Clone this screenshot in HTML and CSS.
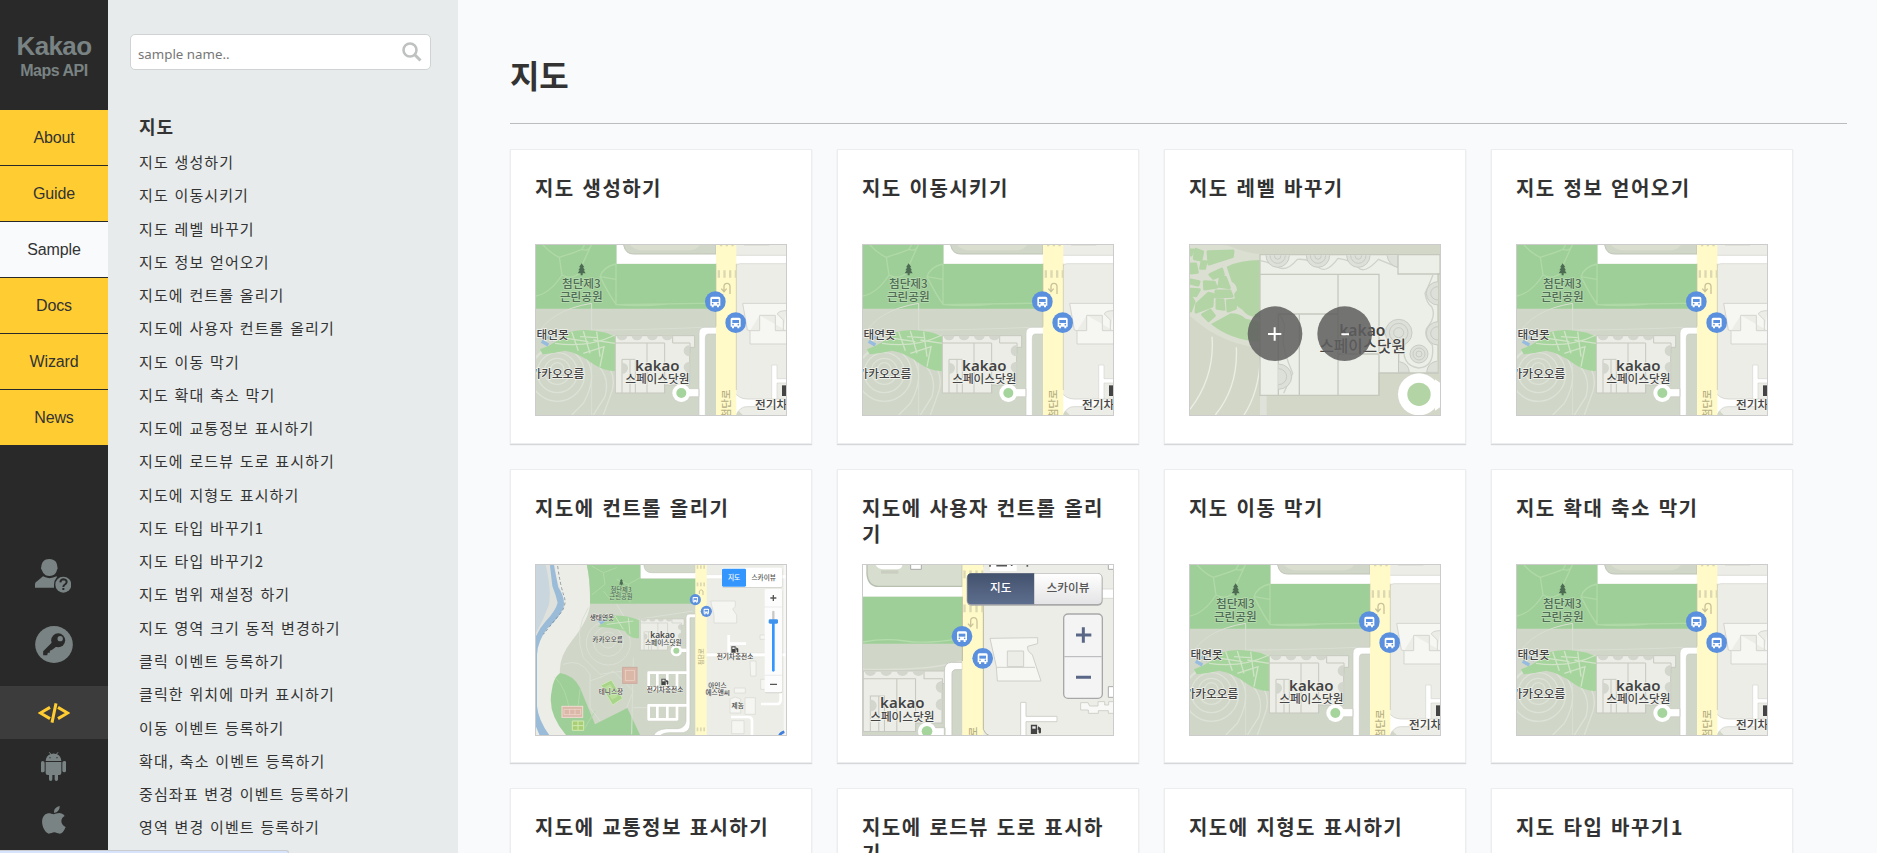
FILE: index.html
```html
<!DOCTYPE html>
<html lang="ko">
<head>
<meta charset="utf-8">
<title>Kakao Maps API - Sample</title>
<link rel="stylesheet" href="styles.css">
</head>
<body>
<svg class="defs" width="0" height="0" aria-hidden="true">
  <defs>
    <linearGradient id="navy" x1="0" y1="0" x2="0" y2="1"><stop offset="0" stop-color="#43526d"/><stop offset="1" stop-color="#5d6e8e"/></linearGradient>
    <linearGradient id="silver" x1="0" y1="0" x2="0" y2="1"><stop offset="0" stop-color="#fff"/><stop offset="1" stop-color="#e4e4e6"/></linearGradient>
    <g id="bus">
      <circle r="31" fill="#5b90de"/>
      <path d="M-15-10q0-5 5-5h20q5 0 5 5v22h-4v5h-6v-5h-10v5h-6v-5h-4z" fill="#fff"/>
      <path d="M-10-8h20v9h-20z" fill="#5b90de"/>
      <circle cx="-8" cy="6" r="2.5" fill="#5b90de"/><circle cx="8" cy="6" r="2.5" fill="#5b90de"/>
    </g>
    <g id="tree" fill="#4c6b52"><path d="M0-17l8 12h-4l6 9h-4l6 9H3v6h-6v-6h-9l6-9h-4l6-9h-4z"/></g>
    <g id="pump"><path d="M-10-10h13v19h-13zM5-7l6 4v9q-2 4-5 0V0h-2" fill="#444"/><path d="M-7-7h7v5h-7z" fill="#eee"/></g>
    <g id="building">
      <path d="M346 587H584V622H569V735H494V759H346Z" fill="#ecede7" stroke="#c6c9bf" stroke-width="3"/>
      <path d="M346 609H494V759M441 609V759M366 759V658H406V759M390 658V759M518 587V609H570V640" fill="none" stroke="#c6c9bf" stroke-width="3"/>
      <g fill="#d3d6cc"><path d="M350 587a16 14 0 0 0 32 0zM395 587a16 14 0 0 0 32 0zM441 587a16 14 0 0 0 32 0zM486 587a16 14 0 0 0 32 0zM569 615a18 17 0 0 0 0 34zM569 665a18 17 0 0 0 0 34zM366 668a18 17 0 0 1 0 34z"/></g>
    </g>
    <symbol id="map-base" viewBox="108 315 750 510" preserveAspectRatio="none">
      <rect x="100" y="310" width="770" height="520" fill="#d0d6c8"/>
      <path d="M100 310H350V372H648V506H100Z" fill="#9fcf98"/>
      <g fill="none" stroke="#b0d9a8" stroke-width="4">
        <path d="M125 310Q150 340 178 352Q230 335 246 328L256 310M246 328Q266 336 274 315L238 392M300 410Q310 380 348 372M178 352L186 405Q150 460 108 468M186 405Q215 420 238 400M300 410L348 418M300 410Q330 470 348 492M348 372V494L600 490Q640 492 648 480M350 494Q420 500 500 492"/>
      </g>
      <path d="M108 590Q150 510 275 490V825M275 570Q430 570 610 562" fill="none" stroke="#dadfd3" stroke-width="3"/>
      <path d="M350 310H648V371H350Z" fill="#fff"/>
      <path d="M371 310H648V342H400Q376 342 371 315Z" fill="#d0d6c8" stroke="#bfc6b7" stroke-width="3"/>
      <path d="M390 315H600Q590 328 575 331H420Q402 328 390 315Z" fill="#d9decf"/>
      <g fill="none" stroke="#dde2d7" stroke-width="4">
        <circle cx="172" cy="688" r="20"/><circle cx="172" cy="694" r="39"/><circle cx="172" cy="698" r="60"/><circle cx="172" cy="702" r="82"/>
        <path d="M108 655Q150 600 250 645Q300 700 250 790L215 825M230 635Q340 680 315 770L280 825"/>
        <path d="M300 650Q360 700 330 770L310 825"/>
      </g>
      <path d="M120 628Q170 610 200 578Q250 562 318 578L346 590V693Q315 695 280 672Q240 640 195 632Q160 640 128 643Z" fill="#a5d59c"/>
      <path d="M165 610Q260 625 346 585M215 575L235 632M250 573L270 640M290 575L300 650M200 595L265 605M250 640L312 620L300 680M280 600L346 610M240 590L290 593" fill="none" stroke="#d0e3c7" stroke-width="4"/>
      <path d="M125 604l20 11M142 590l18 10" stroke="#96bce0" stroke-width="10"/>
      <use href="#building"/>
      <path d="M597 830V580Q597 562 614 562H650V582H625Q616 582 616 595V830ZM545 746H597V770H545Z" fill="#fff" stroke="#c9ccc2" stroke-width="2"/>
      <circle cx="544" cy="759" r="27" fill="#fff"/><circle cx="544" cy="759" r="15" fill="#a5d59c"/>
      <path d="M708 310H860V830H738Q708 820 708 770Z" fill="#ecede7"/>
      <path d="M700 346H860V371H720Q708 371 708 380H700Z" fill="#fff" stroke="#d0d0ca" stroke-width="2"/>
      <path d="M732 310H808V318H732Z" fill="#e0e2da"/>
      <path d="M700 752Q715 777 742 777H860V800H740Q720 800 708 825H700Z" fill="#fff" stroke="#c9ccc2" stroke-width="2"/>
      <path d="M815 777V675H831V716H860V729H831V777Z" fill="#fff" stroke="#d5d6d0" stroke-width="2"/>
      <path d="M728 490H860V612H750V572L742 570Z" fill="#f6f6f3" stroke="#d4d5cf" stroke-width="3"/>
      <path d="M779 526H826V572H860M779 526V572H750M860 512Q835 512 832 522L850 540V570" fill="#ecede7" stroke="#d4d5cf" stroke-width="3"/>
      <path d="M648 310H709V830H648Z" fill="#fffac8"/>
      <path d="M648 371V560M709 371V750" stroke="#c4c2a8" stroke-width="2"/>
      <path d="M653 402H709" stroke="#dcd8b2" stroke-width="22" stroke-dasharray="7 10"/>
      <path d="M660 315H709" stroke="#dcd8b2" stroke-width="8" stroke-dasharray="7 10"/>
      <path d="M690 462V440Q690 430 681 430T672 440V452M664 446L672 455L680 446" fill="none" stroke="#c9c39a" stroke-width="4"/>
      <text class="road" transform="translate(689 834) rotate(-90)">첨단로</text>
      <use href="#tree" x="245" y="387"/>
      <g class="park"><text x="244" y="445">첨단제3</text><text x="244" y="482">근린공원</text></g>
      <g class="poi"><text x="158" y="597">태연못</text><text x="172" y="714">가카오오름</text><text x="472" y="729">스페이스닷원</text><text x="765" y="806" class="start">전기차</text></g>
      <text class="kakao" x="472" y="694">kakao</text>
      <path d="M846 736H860V768H846Z" fill="#444"/>
      <use href="#bus" x="646" y="485"/><use href="#bus" x="707" y="548"/>
    </symbol>
    <symbol id="map-level" viewBox="90 315 750 510" preserveAspectRatio="none">
      <rect x="80" y="310" width="770" height="520" fill="#d3d7c8"/>
      <path d="M80 310L200 316Q260 340 300 343V625Q200 610 130 560L80 520Z" fill="#dbdfd2"/>
      <path d="M200 380Q240 360 300 360V530Q265 535 248 510Q215 490 225 470Q240 440 215 425ZM153 552L212 520Q240 520 257 536L300 545V605Q210 600 153 552Z" fill="#b3d5a6"/>
      <g fill="#b3d5a6" stroke="#b3d5a6" stroke-width="9" stroke-linejoin="round">
        <path d="M92 330h8l-7 15zM93 372h14l5 25-18 2zM108 328l20 8-5 24-20-4zM144 335l75-2-2 17-70 22zM126 365h12l-4 20h-12zM150 404l35-17 5 16-30 12zM181 412h15l12 31-31-4zM133 425l30 2 6 15-35 5zM92 420l25 5-3 10-23-5zM92 448l26 1-10 18-17-3zM92 470l10 15-10 28zM110 492l35-32 13 3-2 35-48 18zM168 453h42l6 16-50 2zM171 480h18l3 28-21-3zM202 482l26-2-2 25-22 8zM128 524l23-13 12 16-17 15z"/>
        <circle cx="114" cy="347" r="10"/><circle cx="236" cy="465" r="9"/>
      </g>
      <path d="M156 590Q165 710 90 808M229 622Q235 740 166 825M301 660Q295 760 252 825" fill="none" stroke="#eceee6" stroke-width="4"/>
      <path d="M300 766h20v60h-20z" fill="#dfe2d8"/>
      <path d="M300 344H840V402H834V699H657V766H300Z" fill="#eceee8" stroke="#c5c9bd" stroke-width="4"/>
      <path d="M300 403H657V766M534 403V766M355 766V522H534M418 522V766M534 642H657M657 584H716V699M714 344V402H840" fill="none" stroke="#c5c9bd" stroke-width="4"/>
      <path d="M300 362Q325 365 352 381T412 358Q450 355 473 380T534 355Q575 360 594 382T655 358L714 382M820 402Q805 440 795 460Q800 490 815 500Q830 530 800 565Q790 590 817 615Q825 680 776 684Q720 675 735 610M355 522Q380 545 371 580T398 700L371 760" fill="none" stroke="#cfd2c9" stroke-width="4"/>
      <g fill="#dde0d8" stroke="#c8cbc3" stroke-width="3">
        <path d="M318 346a35 36 0 0 0 70 0M439 346a35 36 0 0 0 70 0M560 346a35 36 0 0 0 70 0M681 346q5 30 32 36V346M834 425a35 35 0 0 0 0 70M834 545a35 35 0 0 0 0 70M355 672a40 38 0 0 1 0 76"/>
        <path d="M330 346a23 24 0 0 0 46 0M451 346a23 24 0 0 0 46 0M572 346a23 24 0 0 0 46 0M834 440a22 20 0 0 0 0 40M834 560a22 20 0 0 0 0 40M355 686a25 24 0 0 1 0 48M343 346a10 12 0 0 0 20 0M464 346a10 12 0 0 0 20 0M585 346a10 12 0 0 0 20 0M718 665q28 5 30 32h-30M832 663q-30 5-32 34h32"/>
        <circle cx="716" cy="578" r="40"/><circle cx="716" cy="578" r="28"/><circle cx="716" cy="578" r="15"/>
        <circle cx="777" cy="642" r="27"/><circle cx="777" cy="642" r="18"/><circle cx="777" cy="642" r="9"/>
      </g>
      <path d="M825 718L850 735V795L825 812Z" fill="#fff"/>
      <circle cx="777" cy="763" r="63" fill="#fff"/><circle cx="777" cy="763" r="35" fill="#b3d5a6"/>
      <text class="kakao big" x="607" y="587">kakao</text>
      <g class="poi large"><text x="608" y="636">스페이스닷원</text></g>
      <g fill="#5e5e5e" fill-opacity=".86"><circle cx="345" cy="581" r="82"/><circle cx="554" cy="581" r="82"/></g>
      <path d="M324 582H364M344 562V602M544 583H567" stroke="#fff" stroke-width="6"/>
    </symbol>
    <symbol id="map-control" viewBox="108 312 750 510" preserveAspectRatio="none">
      <rect x="100" y="305" width="770" height="525" fill="#ecede7"/>
      <path d="M100 305H165Q165 350 185 395Q200 430 175 460Q115 520 108 570Z" fill="#dfe1dc"/>
      <path d="M100 305H135Q155 380 147 430Q130 480 100 530Z" fill="#c9d6de"/>
      <path d="M157 305L172 380Q195 415 187 440Q178 465 140 500Q110 540 108 580V735Q112 780 150 830H125L100 770V570Q105 520 140 482Q170 450 176 425Q170 400 160 375L153 315Z" fill="#9bbcd8" stroke="#9bbcd8" stroke-width="6"/>
      <path d="M173 315Q180 370 192 405Q201 430 183 455L130 520" fill="none" stroke="#687785" stroke-width="2" stroke-dasharray="9 7"/>
      <path d="M260 310Q270 350 270 428Q270 470 215 540Q175 590 180 640Q220 700 250 830H587V310Z" fill="#d0d6c8"/>
      <path d="M260 310H422V353H588V428H270Q272 360 260 310Z" fill="#9fcf98"/>
      <path d="M180 636Q220 642 240 680L285 790L382 741L424 830H205Q140 760 155 690Q160 650 180 636Z" fill="#9fcf98"/>
      <g fill="none" stroke="#b0d9a8" stroke-width="3"><path d="M275 315L310 335L350 320M310 335L315 370Q290 390 275 402M350 355L385 370L420 350M385 370L390 425M310 390L335 420M165 650Q200 680 210 760M240 685L230 770M285 750L255 800"/></g>
      <g fill="none" stroke="#dbe0d5" stroke-width="3"><circle cx="325" cy="537" r="24"/><circle cx="325" cy="541" r="45"/><circle cx="325" cy="546" r="66"/><path d="M265 440Q220 510 250 590L300 640L405 625M190 610Q240 590 270 640L270 740L300 780M300 650L340 630L400 690L380 740M270 660L310 645M350 430L380 480L580 450M400 590L395 820M400 740H440"/></g>
      <path d="M422 310H588V352H422Z" fill="#fff"/><path d="M432 310H586V335H455Q435 335 432 315Z" fill="#d3d9ca" stroke="#bfc6b7" stroke-width="2"/>
      <path d="M295 498L325 465Q370 460 417 477V531Q390 535 375 510L330 500Z" fill="#a5d59c"/><path d="M320 490L400 480M345 465L370 505M385 470L390 520" stroke="#d0e3c7" stroke-width="3"/>
      <path d="M300 487l15-9M305 474l-9 8" stroke="#96bce0" stroke-width="8"/>
      <use href="#building" transform="translate(231 157) scale(.55 .54)"/>
      <path d="M587 459H567Q558 459 558 470V780Q555 800 535 803H500Q465 805 458 830H475Q485 815 510 815H550Q570 810 570 790V470H587Z" fill="#fff" stroke="#c4c9bd" stroke-width="2"/>
      <path d="M530 563H560V573H530Z" fill="#fff"/><circle cx="529" cy="569" r="17" fill="#fff"/><circle cx="529" cy="569" r="9" fill="#a5d59c"/>
      <path d="M446 635H558M446 683H535M446 635V683M472 635V683M502 635V683M531 635V683M446 733H558M446 775H531M446 733V775M472 733V775M502 733V775M531 733V775" stroke="#fff" stroke-width="8" fill="none" stroke-linecap="round"/>
      <rect x="368" y="619" width="43" height="48" fill="#dbb7a8" stroke="#cbaaa0" stroke-width="3"/><rect x="376" y="628" width="27" height="30" fill="none" stroke="#eed5ca" stroke-width="2"/>
      <path d="M303 673L334 657L368 712L338 732Z" fill="#a9d58a" stroke="#cde7b8" stroke-width="3"/><path d="M313 679l18-9 23 36-18 10z" fill="#b9df9a"/>
      <rect x="186" y="736" width="62" height="33" fill="#dbb7a8" stroke="#f2dcd2" stroke-width="3"/><path d="M192 745h50v16h-50zM209 745v16M225 745v16" fill="none" stroke="#f2dcd2" stroke-width="2"/>
      <path d="M217 780h34v28h-34zM234 780v28M217 794h34" fill="#a8cf74" stroke="#d3e9b4" stroke-width="3"/>
      <path d="M617 341H858V353H617ZM617 576H858V587H617Z" fill="#fff" stroke="#d5d6d0"/>
      <path d="M686 522V577M686 548H738M783 729H832Q842 729 842 715V690M693 768H745Q756 768 756 780V825" stroke="#fff" stroke-width="8" fill="none"/>
      <path d="M632 420H706V436L698 444L710 462V486H642V462ZM750 600H768V645H752ZM690 714L706 708L722 714V756H690ZM735 710H766V760H735ZM703 681H736V696H703ZM695 779H732V818H695ZM780 522H795V535H780ZM782 655H797V685H782Z" fill="#f5f5f2" stroke="#d6d7d1" stroke-width="2"/>
      <path d="M586 305H620V830H586Z" fill="#fffac8"/><path d="M590 370H620M590 805H620M590 318H620" stroke="#dcd8b2" stroke-width="11" stroke-dasharray="5 5"/>
      <path d="M609 402v-12q-6-8-11 0v9" fill="none" stroke="#c9c39a" stroke-width="3"/>
      <text class="road tiny" transform="translate(609 612) rotate(-90)">첨단로</text>
      <use href="#tree" transform="translate(364 363) scale(.55)"/>
      <g class="park tiny"><text x="363" y="393">첨단제3</text><text x="363" y="415">근린공원</text></g>
      <g class="poi tiny"><text x="306" y="478">생태연못</text><text x="323" y="543">카카오오름</text><text x="490" y="552">스페이스닷원</text><text x="333" y="700">테니스장</text><text x="495" y="693">전기차충전소</text><text x="705" y="595">전기차충전소</text><text x="652" y="680">아인스</text><text x="653" y="701">에스앤씨</text><text x="713" y="741">제놈</text></g>
      <text class="kakao tiny" x="488" y="531">kakao</text>
      <use href="#pump" x="494" y="663"/><use href="#pump" x="704" y="566"/>
      <use href="#bus" transform="translate(586 416) scale(.54)"/><use href="#bus" transform="translate(619 451) scale(.54)"/>
      <path d="M851 312h8v510h-8z" fill="#fff" opacity=".6"/><path d="M838 826q2-10 15-14" stroke="#3e7fdd" stroke-width="8" fill="none"/>
      <rect x="666" y="322" width="181" height="58" rx="4" fill="#cfd0cc"/><rect x="666" y="320" width="180" height="58" rx="4" fill="#fff"/><rect x="666" y="323" width="72" height="54" rx="4" fill="#3396ff"/>
      <text class="toggle small light" x="702" y="356">지도</text><text class="toggle small" x="791" y="356">스카이뷰</text>
      <rect x="795" y="386" width="52" height="311" rx="4" fill="#d2d3cf"/><rect x="794" y="384" width="52" height="310" rx="4" fill="#fcfcfc"/>
      <path d="M794 438h52M794 643h52" stroke="#e4e4e4" stroke-width="2"/>
      <path d="M811 411h18M820 402v18M810 670h21" stroke="#555" stroke-width="4"/>
      <path d="M820 453v28" stroke="#c8c8c8" stroke-width="7" stroke-linecap="round"/><path d="M820 481v147" stroke="#3396ff" stroke-width="8" stroke-linecap="round"/><rect x="806" y="475" width="28" height="13" rx="4" fill="#3d93ee"/>
    </symbol>
    <symbol id="map-custom" viewBox="114 312 750 510" preserveAspectRatio="none">
      <rect x="105" y="305" width="770" height="525" fill="#ecede7"/>
      <path d="M105 305H412V830H105Z" fill="#d0d6c8"/>
      <path d="M105 305H412V407H105Z" fill="#fff"/>
      <path d="M126 305H412V376H160Q130 376 126 340Z" fill="#d8decf" stroke="#b8c0b0" stroke-width="4"/>
      <path d="M152 312Q160 325 175 325H215Q230 325 232 312Z" fill="#fff"/><path d="M168 328h52v10h-52z" fill="#c9cec1"/><path d="M257 305h32v20h-32zM850 305h20v20h-20zM850 677h20v32h-20z" fill="#fff" stroke="#aaa" stroke-width="3"/>
      <path d="M105 407H412V548H105Z" fill="#9fcf98"/><path d="M114 543Q180 530 240 540T410 532" stroke="#b4dcac" stroke-width="4" fill="none"/>
      <path d="M105 624Q300 632 410 600" stroke="#dce0d5" stroke-width="4" fill="none"/>
      <use href="#building" transform="translate(-252 11) scale(1.06 1.055)"/>
      <path d="M358 830V630Q358 604 380 604H412V626H392Q381 626 381 640V830ZM320 800H360V825H320Z" fill="#fff" stroke="#c6cabf" stroke-width="3"/>
      <circle cx="306" cy="811" r="27" fill="#fff"/><circle cx="306" cy="811" r="16" fill="#a5d59c"/>
      <path d="M475 384H870V412H487Q475 412 475 425Z" fill="#fff" stroke="#cfd0c9" stroke-width="2"/>
      <path d="M495 312h80v18h-80z" fill="#fff"/>
      <path d="M472 312v5M495 312v5M514 314h32M560 312v3M607 312v5" stroke="#555" stroke-width="5"/>
      <path d="M495 532L638 530V548L608 556Q605 570 622 581L648 660H517L514 617Z" fill="#f6f6f3" stroke="#cfd0c9" stroke-width="3"/><path d="M547 570h49v47h-49zM514 619H630" fill="#ecede7" stroke="#cfd0c9" stroke-width="3"/>
      <path d="M587 830V724H603V766H696V782H603V830Z" fill="#fff" stroke="#d0d1cb" stroke-width="3"/>
      <path d="M767 725h22l5 10h25V722h20v10h12V722h20v35H850v-8H820v8H790v-10H767Z" fill="#f8f8f6" stroke="#d0d1cb" stroke-width="3"/>
      <path d="M412 305H475V830H412Z" fill="#fffac8"/><path d="M412 407V600M475 430V805Q480 820 495 825" stroke="#b9b8a2" stroke-width="3" fill="none"/>
      <path d="M415 442H475M415 340H475" stroke="#dcd8b2" stroke-width="23" stroke-dasharray="7 11"/>
      <path d="M456 503V480Q455 470 446 470T437 480V494M429 488L437 497L445 488" fill="none" stroke="#c9c39a" stroke-width="4"/>
      <text class="road" transform="translate(455 826) rotate(-90)">로</text>
      <text class="kakao" x="232" y="742">kakao</text><g class="poi"><text x="232" y="779">스페이스닷원</text></g>
      <use href="#pump" transform="translate(632 806) scale(1.45)"/>
      <use href="#bus" x="411" y="526"/><use href="#bus" x="473" y="592"/>
      <rect x="425" y="337" width="408" height="97" rx="14" fill="#aaa"/>
      <path d="M439 337H628V430H439Q427 430 427 418V349Q427 337 439 337Z" fill="url(#navy)"/><path d="M628 338H817Q830 338 830 350V416Q830 429 817 429H628Z" fill="url(#silver)"/>
      <text class="toggle light" x="527" y="392">지도</text><text class="toggle" x="729" y="392">스카이뷰</text>
      <rect x="716" y="459" width="116" height="253" rx="13" fill="#f4f4f5" stroke="#a8a8aa" stroke-width="4"/><path d="M718 587H830" stroke="#b4b4b7" stroke-width="3"/>
      <path d="M753 522H799M775 499V545M753 649H798" stroke="#596686" stroke-width="9"/>
    </symbol>
  </defs>
</svg>

<div class="app">
  <aside class="rail">
    <div class="brand"><strong>Kakao</strong><span>Maps API</span></div>
    <nav class="nav">
      <a>About</a><a>Guide</a><a class="active">Sample</a><a>Docs</a><a>Wizard</a><a>News</a>
    </nav>
    <div class="tools">
      <a class="tool tool-user"><svg width="36" height="34" viewBox="0 0 108 102" fill="#798383"><path d="M43 0C60 0 67 11 67 24Q70 27 66 32Q63 45 54 49Q43 53 32 49Q24 44 20 32Q16 28 19 23C20 10 27 0 43 0ZM0 86V75Q0 69 8 65L24 52Q43 63 65 52L66 54Q57 64 57 77V86Z"/><circle cx="85" cy="77" r="24"/><path d="M76 70Q77 61 86 61Q95 62 95 69Q95 74 88 78Q85 80 85 84M85 87V93" fill="none" stroke="#292929" stroke-width="6"/></svg></a>
      <a class="tool tool-key"><svg width="38" height="37" viewBox="0 0 113 111"><ellipse cx="56.500" cy="55.500" rx="56.500" ry="55.500" fill="#798383"/><circle cx="69" cy="43" r="21" fill="#292929"/><path d="M51 49L24 76V88H36L38 80H44V74L50 72L66 60Z" fill="#292929"/><circle cx="75" cy="38" r="8" fill="#798383"/></svg></a>
      <a class="tool tool-code"><svg width="32" height="20" viewBox="0 0 96 60" fill="none" stroke="#ffcd32" stroke-width="9"><path d="M36 13L7 30L36 47M60 13L89 30L60 47M54 1L42 59"/></svg></a>
      <a class="tool tool-android"><svg width="25" height="29" viewBox="0 0 75 87" fill="#798383"><path d="M14 27Q15 12 28 7L23 0H25L31 6Q38 3 45 6L51 0H53L48 7Q60 12 61 27ZM14 30H61V63Q61 69 55 69H51V82Q51 87 46 87T41 82V69H34V82Q34 87 29 87T24 82V69H20Q14 69 14 63ZM0 32Q0 27 5 27T11 32V56Q11 61 5 61T0 56ZM64 32Q64 27 70 27T75 32V56Q75 61 70 61T64 56Z"/><circle cx="27" cy="17" r="2" fill="#292929"/><circle cx="48" cy="17" r="2" fill="#292929"/></svg></a>
      <a class="tool tool-apple"><svg width="24" height="28" viewBox="0 0 72 84" fill="#798383"><path d="M53 0Q54 9 48 15Q43 21 36 20Q35 12 41 6Q46 1 53 0ZM36 25C43 22 59 16 68 30C52 38 57 59 71 63C66 76 60 83 53 83C46 83 43 79 37 79C31 79 27 83 20 83C9 80-3 58 1 40C4 25 17 19 28 23Z"/></svg></a>
    </div>
  </aside>

  <aside class="sidebar">
    <div class="search"><span>sample name..</span><svg width="20" height="20" viewBox="0 0 20 20" fill="none" stroke="#bfc1c1"><circle cx="8" cy="8" r="6.500" stroke-width="2.600"/><path d="M13 13L18.500 18.500" stroke-width="3"/></svg></div>
    <h3>지도</h3>
    <ul class="samples">
      <li>지도 생성하기</li><li>지도 이동시키기</li><li>지도 레벨 바꾸기</li><li>지도 정보 얻어오기</li><li>지도에 컨트롤 올리기</li><li>지도에 사용자 컨트롤 올리기</li><li>지도 이동 막기</li><li>지도 확대 축소 막기</li><li>지도에 교통정보 표시하기</li><li>지도에 로드뷰 도로 표시하기</li><li>지도에 지형도 표시하기</li><li>지도 타입 바꾸기1</li><li>지도 타입 바꾸기2</li><li>지도 범위 재설정 하기</li><li>지도 영역 크기 동적 변경하기</li><li>클릭 이벤트 등록하기</li><li>클릭한 위치에 마커 표시하기</li><li>이동 이벤트 등록하기</li><li>확대, 축소 이벤트 등록하기</li><li>중심좌표 변경 이벤트 등록하기</li><li>영역 변경 이벤트 등록하기</li>
    </ul>
  </aside>

  <main class="content">
    <h1>지도</h1>
    <div class="cards">
      <article class="card"><h2>지도 생성하기</h2><svg class="thumb"><use href="#map-base"/></svg></article>
      <article class="card"><h2>지도 이동시키기</h2><svg class="thumb"><use href="#map-base"/></svg></article>
      <article class="card"><h2>지도 레벨 바꾸기</h2><svg class="thumb"><use href="#map-level"/></svg></article>
      <article class="card"><h2>지도 정보 얻어오기</h2><svg class="thumb"><use href="#map-base"/></svg></article>
      <article class="card"><h2>지도에 컨트롤 올리기</h2><svg class="thumb"><use href="#map-control"/></svg></article>
      <article class="card"><h2>지도에 사용자 컨트롤 올리기</h2><svg class="thumb"><use href="#map-custom"/></svg></article>
      <article class="card"><h2>지도 이동 막기</h2><svg class="thumb"><use href="#map-base"/></svg></article>
      <article class="card"><h2>지도 확대 축소 막기</h2><svg class="thumb"><use href="#map-base"/></svg></article>
      <article class="card"><h2>지도에 교통정보 표시하기</h2></article>
      <article class="card"><h2>지도에 로드뷰 도로 표시하기</h2></article>
      <article class="card"><h2>지도에 지형도 표시하기</h2></article>
      <article class="card"><h2>지도 타입 바꾸기1</h2></article>
    </div>
  </main>
</div>
<div class="status"></div>
</body>
</html>
```
FILE: styles.css
```css
* { box-sizing: border-box; }
html, body { margin: 0; height: 100%; overflow: hidden; }
body {
  color: #333;
  background: #f9fafc;
  font-family: "Noto Sans CJK KR", sans-serif;
}
.defs { position: absolute; }
.app { display: flex; height: 853px; overflow: hidden; }

/* left rail */
.rail {
  display: flex;
  flex-direction: column;
  flex: none;
  width: 108px;
  background: #292929;
  font-family: "Liberation Sans", Arial, sans-serif;
}
.brand {
  display: flex;
  flex-direction: column;
  align-items: center;
  height: 110px;
  padding-top: 30px;
  color: #798383;
  font-weight: bold;
}
.brand strong { font-size: 26px; line-height: 32px; letter-spacing: -.6px; }
.brand span { font-size: 16px; line-height: 17px; letter-spacing: -.5px; }
.nav { display: grid; gap: 1px; grid-auto-rows: 55px; }
.nav a {
  display: flex;
  align-items: center;
  justify-content: center;
  background: #ffcd32;
  font-size: 16px;
  letter-spacing: -.15px;
}
.nav .active { background: #f9fafc; }
.tools { display: flex; flex-direction: column; padding-top: 101px; }
.tool { display: flex; justify-content: center; align-items: center; }
.tool svg { display: block; }
.tool-user { height: 60px; }
.tool-user svg { margin-right: 2px; }
.tool-key { height: 77px; }
.tool-code { height: 53px; margin-top: 3px; background: #3c3c3c; }
.tool-android { height: 55px; }
.tool-apple { height: 52px; }
.tool-android svg, .tool-apple svg { margin-right: 1px; }

/* sample index */
.sidebar { flex: none; width: 350px; background: #e7ebeb; }
.search {
  display: flex;
  align-items: center;
  justify-content: space-between;
  width: 301px;
  height: 36px;
  margin: 34px 0 0 22px;
  padding: 0 8px 0 7px;
  border: 1px solid #cfd3d3;
  border-radius: 5px;
  background: #fff;
  color: #777;
  font-family: "Noto Sans", sans-serif;
  font-size: 13.300px;
}
.search span { padding-top: 4px; }
.sidebar h3 {
  margin: 40px 0 0 31px;
  font-size: 18px;
  line-height: 32px;
  letter-spacing: .9px;
}
.samples {
  margin: 3px 0 0;
  padding: 0 0 0 31px;
  list-style: none;
  font-size: 15px;
  line-height: 33.270px;
  letter-spacing: 1.100px;
  word-spacing: .4px;
  white-space: nowrap;
}

/* cards */
.content { flex: 1; padding: 45px 30px 0 52px; }
h1 {
  height: 79px;
  margin: 0;
  border-bottom: 1px solid #bbbcbe;
  font-size: 32px;
  line-height: 59px;
  letter-spacing: -.3px;
}
.cards {
  display: grid;
  grid-template-columns: repeat(4, 302px);
  grid-auto-rows: 294.500px;
  gap: 25px;
  padding-top: 25.200px;
}
.card {
  padding: 25px 24px 0;
  border: 1px solid #ecedee;
  background: #fff;
  box-shadow: 0 1px 1px #d5d7da;
}
.card h2 {
  height: 69px;
  margin: 0;
  font-size: 20px;
  line-height: 26px;
  letter-spacing: 1.450px;
  word-spacing: .8px;
  word-break: break-all;
}
.thumb { display: block; width: 252px; height: 172px; border: 1px solid #ccc; }

/* map lettering */
.poi text, .park text, .kakao, .road, .toggle {
  font-family: "Noto Sans CJK KR", sans-serif;
  font-weight: 500;
  text-anchor: middle;
}
.poi text, .park text, .kakao { paint-order: stroke; stroke: #f3f4ef; stroke-width: 4px; }
.poi text { font-size: 35px; fill: #444; }
.poi .start { text-anchor: start; }
.poi.large text { font-size: 47px; }
.poi.tiny text { font-size: 20px; stroke-width: 2px; }
.park text { font-size: 35px; fill: #4f6c54; stroke: #b8dcb1; }
.park.tiny text { font-size: 19px; stroke-width: 2px; }
.kakao { font-family: "Noto Sans", sans-serif; font-weight: 600; font-size: 45px; fill: #444; }
.kakao.big { font-size: 47px; }
.kakao.tiny { font-size: 25px; stroke-width: 2px; }
.road { font-size: 31px; fill: #b5ae84; text-anchor: start; }
.road.tiny { font-size: 18px; }
.toggle { font-size: 35px; fill: #555; }
.toggle.small { font-size: 20px; }
.toggle.light { fill: #fff; }

/* link preview strip at the window's lower edge */
.status {
  position: absolute;
  left: 0;
  bottom: 0;
  width: 289px;
  height: 3px;
  border-top: 1px solid #c8cccf;
  border-right: 1px solid #c8cccf;
  border-top-right-radius: 4px;
  background: #d7e4fb;
}
```
